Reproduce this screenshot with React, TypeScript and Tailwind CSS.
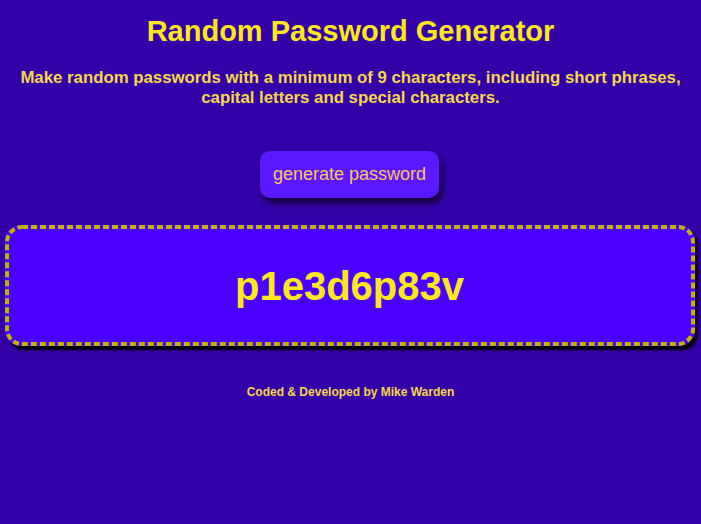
export default function App() {
  const password = "p1e3d6p83v";

  return (
    <div className="min-h-[524px] bg-[#3300a8] flex flex-col items-center font-['Liberation_Sans',Arial,sans-serif] text-[#ffe81a]">
      <h1 className="mt-[14px] text-[29px] font-bold leading-[35px]">Random Password Generator</h1>
      <p className="mt-[19px] px-4 text-center text-[16.8px] font-bold leading-[20px] text-[#f7d84a]">
        Make random passwords with a minimum of 9 characters, including short phrases,
        <br />
        capital letters and special characters.
      </p>

      <button className="mt-[43px] h-[47px] w-[179px] -translate-x-[1px] rounded-[10px] bg-[#5a18ff] text-[18px] text-[#f5c95a] shadow-[3px_5px_6px_rgba(0,0,0,0.7)]">
        generate password
      </button>

      {/* password box, dashed outline drawn in svg so the dash rhythm matches */}
      <div className="relative mt-[27px] w-[690px] h-[121px] -translate-x-[1px] rounded-[16px] bg-[#4a00ff] shadow-[3px_4px_3px_#000] flex items-center justify-center">
        <svg className="absolute inset-0" width="690" height="121" viewBox="0 0 690 121">
          <rect x="2" y="2" width="686" height="117" rx="15" fill="none" stroke="#c4b200" strokeWidth="4" strokeDasharray="6 3" />
        </svg>
        <span className="relative text-[40px] font-bold text-[#ffe81a]">{password}</span>
      </div>

      <footer className="mt-[37px] text-[12px] font-bold text-[#f7d84a]">Coded &amp; Developed by Mike Warden</footer>
    </div>
  );
}
